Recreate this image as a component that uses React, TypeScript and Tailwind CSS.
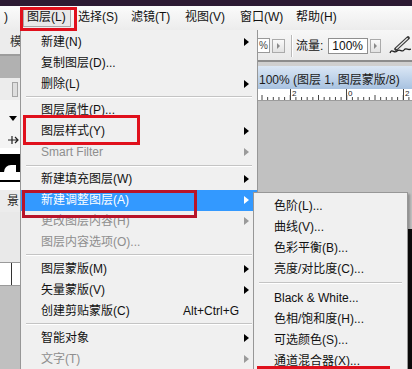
import clsx from "clsx";

type Entry =
  | "sep"
  | {
      label: string;
      arrow?: boolean;
      disabled?: boolean;
      active?: boolean;
      shortcut?: string;
    };

const layerMenu: Entry[] = [
  { label: "新建(N)", arrow: true },
  { label: "复制图层(D)..." },
  { label: "删除(L)", arrow: true },
  "sep",
  { label: "图层属性(P)..." },
  { label: "图层样式(Y)", arrow: true },
  { label: "Smart Filter", arrow: true, disabled: true },
  "sep",
  { label: "新建填充图层(W)", arrow: true },
  { label: "新建调整图层(A)", arrow: true, active: true },
  { label: "更改图层内容(H)", arrow: true, disabled: true },
  { label: "图层内容选项(O)...", disabled: true },
  "sep",
  { label: "图层蒙版(M)", arrow: true },
  { label: "矢量蒙版(V)", arrow: true },
  { label: "创建剪贴蒙版(C)", shortcut: "Alt+Ctrl+G" },
  "sep",
  { label: "智能对象", arrow: true },
  { label: "文字(T)", arrow: true, disabled: true },
];

const adjustMenu: Entry[] = [
  { label: "色阶(L)..." },
  { label: "曲线(V)..." },
  { label: "色彩平衡(B)..." },
  { label: "亮度/对比度(C)..." },
  "sep",
  { label: "Black & White..." },
  { label: "色相/饱和度(H)..." },
  { label: "可选颜色(S)..." },
  { label: "通道混合器(X)..." },
];

const Separator = () => (
  <div className="flex h-[8px] items-center px-[5px]">
    <div className="h-[2px] w-full border-t border-t-[#c4c4c4] border-b border-b-white" />
  </div>
);

const MenuRows = ({ items }: { items: Entry[] }) => (
  <>
    {items.map((it, i) =>
      it === "sep" ? (
        <Separator key={i} />
      ) : (
        <div
          key={i}
          className={clsx(
            "flex h-[21px] shrink-0 items-center pl-[20px] pr-[8px] leading-none whitespace-nowrap",
            it.active && "bg-[#3399ff] text-white",
            !it.active && it.disabled && "text-[#8e8e8e]",
            !it.active && !it.disabled && "text-[#111]"
          )}
        >
          <span>{it.label}</span>
          {it.shortcut && (
            <span className="mr-[10px] ml-auto">{it.shortcut}</span>
          )}
          {it.arrow && (
            <span
              className={clsx(
                "ml-auto h-0 w-0 border-y-[4px] border-l-[5px] border-y-transparent",
                it.active
                  ? "border-l-white"
                  : it.disabled
                    ? "border-l-[#9a9a9a]"
                    : "border-l-black"
              )}
            />
          )}
        </div>
      )
    )}
  </>
);

const MenuBar = () => (
  <div className="flex h-[24px] items-center bg-gradient-to-b from-[#fbfbfb] to-[#ececec] pb-[3px] text-[12px] leading-none text-[#111]">
    <span className="w-[23px] pl-[4px]">)</span>
    <span className="flex h-[20px] w-[48px] items-center border border-[#a9a9a9] bg-[#e9e9e9] pl-[3px]">
      图层(L)
    </span>
    <span className="w-[53px] pl-[7px]">选择(S)</span>
    <span className="w-[54px] pl-[7px]">滤镜(T)</span>
    <span className="w-[55px] pl-[7px]">视图(V)</span>
    <span className="w-[56px] pl-[7px]">窗口(W)</span>
    <span className="pl-[7px]">帮助(H)</span>
  </div>
);

const LeftStrip = () => (
  <div className="flex w-[20px] shrink-0 flex-col overflow-hidden bg-[#ececec] text-[12px] leading-none">
    <div className="flex h-[24px] items-center pl-[10px] text-[#333]">模</div>
    <div className="h-[2px] bg-[#9c9c9c]" />
    <div className="h-[22px] bg-[#b1b1b1]" />
    <div className="flex h-[22px] items-center justify-end pr-[2px]">
      <div className="h-[15px] w-[6px] border border-[#a5a5a5] bg-[#dedede]" />
    </div>
    <div className="h-[12px] bg-[#f4f4f4]" />
    <div className="flex h-[13px] items-center justify-end bg-[#f4f4f4] pr-[3px]">
      <span className="h-0 w-0 border-x-[4px] border-t-[5px] border-x-transparent border-t-black" />
    </div>
    <div className="h-[7px] bg-[#f4f4f4]" />
    <div className="flex h-[16px] items-center justify-end bg-[#f4f4f4] pr-[1px]">
      <svg width="12" height="12" viewBox="0 0 12 12">
        <path d="M1 6 H11 M8 3 L11 6 L8 9 M5 2 V10" stroke="#222" strokeWidth="1.2" fill="none" />
      </svg>
    </div>
    <div className="h-[6px] bg-white" />
    <div className="flex h-[18px] items-end bg-black pl-[4px]">
      <div className="h-[7px] w-[12px] rounded-tl-[8px] bg-white" />
    </div>
    <div className="h-[8px] bg-white" />
    <div className="h-[2px] bg-black" />
    <div className="h-[8px] bg-white" />
    <div className="flex h-[22px] items-center pl-[7px] text-[#222]">景</div>
    <div className="h-[50px] bg-[#e9e9e9]" />
    <div className="flex h-[24px] border-y border-[#9a9a9a] bg-white pl-[11px]">
      <div className="w-[1px] bg-[#333]" />
    </div>
    <div className="flex-1 bg-[#c0c0c0]" />
  </div>
);

const SmallSpin = ({ w }: { w: string }) => (
  <div
    className={clsx(
      "flex h-[14px] shrink-0 items-center justify-center border border-[#aaaaaa] bg-gradient-to-b from-[#fafafa] to-[#e2e2e2]",
      w
    )}
  >
    <span className="h-0 w-0 border-y-[3px] border-l-[3px] border-y-transparent border-l-[#8a8a8a]" />
  </div>
);

const Ruler = () => (
  <svg width="154" height="11" viewBox="0 0 154 11" className="block shrink-0 bg-white">
    {Array.from({ length: 28 }).map((_, i) => {
      const x = 4 + i * 5.65;
      return (
        <line
          key={i}
          x1={x}
          x2={x}
          y1={i % 5 === 0 ? 6 : 8}
          y2={11}
          stroke="#444"
          strokeWidth="1"
        />
      );
    })}
    <line x1="32.5" x2="32.5" y1="0" y2="11" stroke="#444" />
    <line x1="88.5" x2="88.5" y1="0" y2="11" stroke="#444" />
    <line x1="145.5" x2="145.5" y1="0" y2="11" stroke="#444" />
    <text x="34" y="7" fontSize="8" fill="#222" fontFamily="Liberation Sans, sans-serif">2</text>
    <text x="90" y="7" fontSize="8" fill="#222" fontFamily="Liberation Sans, sans-serif">0</text>
    <text x="147" y="7" fontSize="8" fill="#222" fontFamily="Liberation Sans, sans-serif">2</text>
  </svg>
);

const RightArea = () => (
  <div className="flex min-w-0 flex-1 flex-col overflow-hidden text-[12px] leading-none">
    <div className="flex h-[30px] shrink-0 items-center overflow-hidden bg-gradient-to-b from-[#f7f7f7] to-[#e9e9e9] pt-[1px] whitespace-nowrap">
      <div className="flex h-[15px] w-[12px] shrink-0 items-center justify-end overflow-hidden border-y border-r border-[#999] bg-white pr-[1px] text-[10px] text-[#444]">
        %
      </div>
      <div className="ml-[2px] shrink-0">
        <SmallSpin w="w-[13px]" />
      </div>
      <div className="ml-[6px] h-[22px] w-[2px] shrink-0 border-l border-l-[#b9b9b9] border-r border-r-white" />
      <span className="ml-[3px] shrink-0 text-[#111]">流量:</span>
      <div className="ml-[5px] flex h-[16px] w-[40px] shrink-0 items-center border border-[#8f8f8f] bg-white pl-[3px] text-[#111]">
        100%
      </div>
      <div className="ml-[2px] shrink-0">
        <SmallSpin w="w-[11px]" />
      </div>
      <svg width="22" height="20" viewBox="0 0 22 20" className="ml-[8px] shrink-0">
        <path d="M7 13 L19 2" stroke="#3a3a3a" strokeWidth="3.6" strokeLinecap="round" />
        <path d="M7.6 12.4 L18.4 2.6" stroke="#e8e8e8" strokeWidth="1.3" strokeLinecap="round" />
        <path d="M1 17 C3 12 5 18 8 15 S13 17 15 14 S19 15 22 13" stroke="#222" strokeWidth="1.3" fill="none" />
      </svg>
    </div>
    <div className="h-[2px] shrink-0 bg-[#8c8c8c]" />
    <div className="h-[4px] shrink-0 bg-[#cfcfcf]" />
    <div className="flex h-[23px] shrink-0 items-center bg-gradient-to-b from-[#dbe7f5] to-[#a8c2e0] pt-[4px] pl-[1px] whitespace-nowrap text-[#1c1c1c]">
      100% (图层 1, 图层蒙版/8)
    </div>
    <Ruler />
    <div className="flex flex-1">
      <div className="flex-1 border-t border-[#9c9c9c] bg-[#c1c1c1]" />
      <div className="flex w-[4px] flex-col border-t border-[#9c9c9c]">
        <div className="h-[128px] bg-[#c1c1c1]" />
        <div className="flex-1 bg-[#0d0b0b]" />
      </div>
    </div>
  </div>
);

export default function App() {
  return (
    <div className="relative h-[369px] w-[412px] overflow-hidden bg-[#c1c1c1] font-['Liberation_Sans','Noto_Sans_CJK_SC',sans-serif]">
      <div className="h-[6px] bg-[#2d1b33]" />
      <MenuBar />
      <div className="flex h-[339px]">
        <LeftStrip />
        <div className="flex w-[238px] shrink-0 flex-col overflow-hidden border-x border-[#979797] bg-[#f0f0f0] pt-[1px] text-[12px]">
          <MenuRows items={layerMenu} />
        </div>
        <RightArea />
      </div>

      {/* submenu of 新建调整图层 */}
      <div className="absolute top-[192px] left-[253px] flex h-[190px] w-[155px] flex-col border border-[#979797] bg-[#f0f0f0] pt-[2px] text-[12px] shadow-[2px_2px_2px_rgba(0,0,0,0.25)]">
        <MenuRows items={adjustMenu} />
      </div>

      {/* red annotation boxes */}
      <div className="absolute top-[7px] left-[20px] h-[24px] w-[57px] border-[3px] border-[#e0101c]" />
      <div className="absolute top-[115px] left-[23px] h-[30px] w-[117px] border-[3px] border-[#e0101c]" />
      <div className="absolute top-[190px] left-[22px] h-[28px] w-[175px] border-[3px] border-[#b8142a]" />
      <div className="absolute top-[366px] left-[257px] h-[12px] w-[133px] border-[3px] border-[#e0101c]" />
    </div>
  );
}
